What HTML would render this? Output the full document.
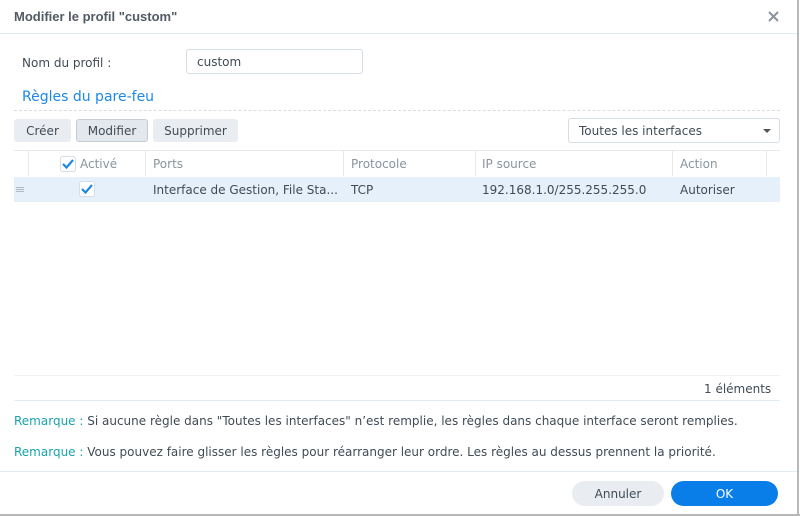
<!DOCTYPE html>
<html><head><meta charset="utf-8"><style>
*{box-sizing:border-box}
body{margin:0;width:800px;height:516px;background:#fff;font-family:"DejaVu Sans",sans-serif;font-size:12px;color:#414b55;position:relative;overflow:hidden}
.a{position:absolute}
.btn{position:absolute;top:119px;height:23px;background:#e9edf2;border-radius:3px;text-align:center;line-height:24px;font-size:12px;color:#414b55}
.th{position:absolute;top:152px;height:25px;line-height:25px;color:#8a949e;font-size:12px}
.td{position:absolute;top:178px;height:25px;line-height:25px;font-size:12px;color:#414b55}
.vl{position:absolute;top:151px;width:1px;height:25px;background:#e6eaee}
.chk{position:absolute;width:16px;height:16px;border:1px solid #d6dde4;border-radius:3px;background:#fff}
</style></head><body>
<div class="a" style="left:14px;top:9px;font-family:'Liberation Sans',sans-serif;font-weight:bold;font-size:13px;color:#505a64">Modifier le profil "custom"</div>
<svg class="a" style="left:768px;top:11px" width="11" height="11"><path d="M1 1L10 10M10 1L1 10" stroke="#8a949e" stroke-width="2"/></svg>
<div class="a" style="left:0;top:33px;width:798px;height:1px;background:#e3ebf3"></div>
<div class="a" style="left:22px;top:56px;font-size:12px">Nom du profil :</div>
<div class="a" style="left:186px;top:49px;width:177px;height:25px;border:1px solid #d6dde4;border-radius:3px;padding-left:10px;line-height:24px">custom</div>
<div class="a" style="left:22px;top:89px;font-size:14px;color:#1e88e5">Règles du pare-feu</div>
<div class="a" style="left:14px;top:110px;width:766px;border-top:1px dashed #d6dde4"></div>
<div class="btn" style="left:14px;width:57px">Créer</div>
<div class="btn" style="left:76px;width:72px;border:1px solid #c6ccd2;line-height:22px;background:#e3e8ee">Modifier</div>
<div class="btn" style="left:153px;width:85px">Supprimer</div>
<div class="a" style="left:568px;top:118px;width:212px;height:25px;border:1px solid #d6dde4;border-radius:3px;padding-left:10px;line-height:24px">Toutes les interfaces</div>
<div class="a" style="left:763px;top:129px;width:0;height:0;border-left:4px solid transparent;border-right:4px solid transparent;border-top:4px solid #555"></div>
<div class="a" style="left:14px;top:150px;width:766px;height:1px;background:#e6eaee"></div>
<div class="vl" style="left:28px"></div><div class="vl" style="left:145px"></div><div class="vl" style="left:343px"></div><div class="vl" style="left:475px"></div><div class="vl" style="left:672px"></div><div class="vl" style="left:766px"></div>
<div class="chk" style="left:60px;top:156px"></div>
<svg class="a" style="left:60px;top:156px" width="16" height="16"><path d="M3 8L6.5 11.5L13 4" stroke="#1e88e5" stroke-width="2.2" fill="none"/></svg>
<div class="th" style="left:80px">Activé</div>
<div class="th" style="left:153px">Ports</div>
<div class="th" style="left:351px">Protocole</div>
<div class="th" style="left:482px">IP source</div>
<div class="th" style="left:680px">Action</div>
<div class="a" style="left:14px;top:177px;width:766px;height:25px;background:#e5f0fb"></div>
<div class="a" style="left:16px;top:187px;width:8px;height:1px;background:#b0b8c0;box-shadow:0 2px #b0b8c0,0 4px #b0b8c0"></div>
<div class="chk" style="left:79px;top:181px"></div>
<svg class="a" style="left:79px;top:181px" width="16" height="16"><path d="M3 8L6.5 11.5L13 4" stroke="#1e88e5" stroke-width="2.2" fill="none"/></svg>
<div class="td" style="left:153px">Interface de Gestion, File Sta...</div>
<div class="td" style="left:351px">TCP</div>
<div class="td" style="left:482px">192.168.1.0/255.255.255.0</div>
<div class="td" style="left:680px">Autoriser</div>
<div class="a" style="left:14px;top:375px;width:766px;height:1px;background:#eef1f4"></div>
<div class="a" style="left:704px;top:382px">1 éléments</div>
<div class="a" style="left:14px;top:400px;width:766px;height:1px;background:#e3ebf3"></div>
<div class="a" style="left:14px;top:414px"><span style="color:#1aa3a8">Remarque :</span> Si aucune règle dans "Toutes les interfaces" n’est remplie, les règles dans chaque interface seront remplies.</div>
<div class="a" style="left:14px;top:445px"><span style="color:#1aa3a8">Remarque :</span> Vous pouvez faire glisser les règles pour réarranger leur ordre. Les règles au dessus prennent la priorité.</div>
<div class="a" style="left:0;top:471px;width:798px;height:1px;background:#e3ebf3"></div>
<div class="a" style="left:572px;top:481px;width:92px;height:25px;border-radius:13px;background:#e9edf2;text-align:center;line-height:26px">Annuler</div>
<div class="a" style="left:671px;top:481px;width:107px;height:25px;border-radius:13px;background:#0a7ee8;color:#fff;text-align:center;line-height:26px">OK</div>
<div class="a" style="left:797px;top:0;width:2px;height:516px;background:#b8b8b8"></div>
<div class="a" style="left:0;top:514px;width:800px;height:2px;background:#b8b8b8"></div>
</body></html>
